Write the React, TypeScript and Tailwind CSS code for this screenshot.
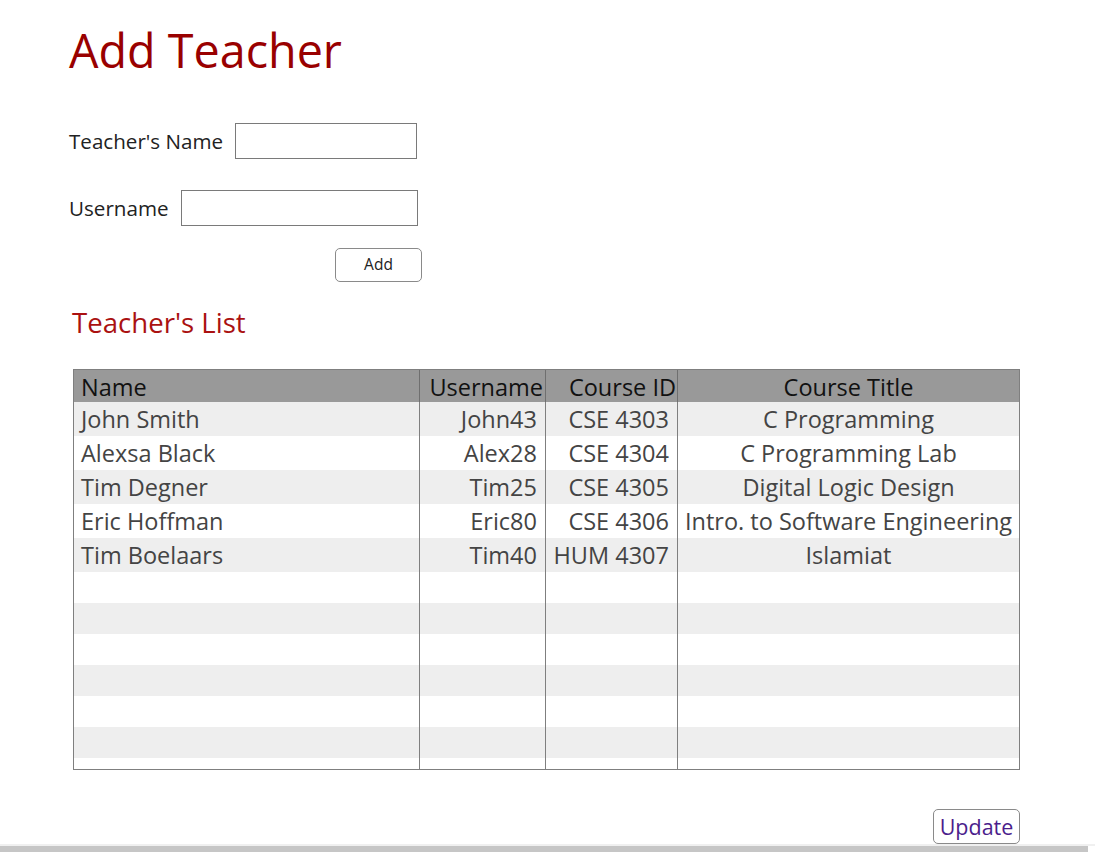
import React from "react";

const teachers = [
  { name: "John Smith", username: "John43", courseId: "CSE 4303", title: "C Programming" },
  { name: "Alexsa Black", username: "Alex28", courseId: "CSE 4304", title: "C Programming Lab" },
  { name: "Tim Degner", username: "Tim25", courseId: "CSE 4305", title: "Digital Logic Design" },
  { name: "Eric Hoffman", username: "Eric80", courseId: "CSE 4306", title: "Intro. to Software Engineering" },
  { name: "Tim Boelaars", username: "Tim40", courseId: "HUM 4307", title: "Islamiat" },
];

const cols = "grid grid-cols-[345px_126px_132px_342px]";

const App = () => {
  return (
    <div
      className="relative w-[1095px] h-[852px] bg-white overflow-hidden"
      style={{ fontFamily: '"Open Sans", "Noto Sans", sans-serif' }}
    >
      <div className="pl-[69px] pt-[20px]">
        <h1 className="text-[46.7px] leading-[60px] text-[#990000]">Add Teacher</h1>

        <div className="mt-[43px] flex items-center h-[36px]">
          <label className="text-[20.6px] text-[#222] mr-[12px]">Teacher's Name</label>
          <input
            type="text"
            className="w-[182px] h-[36px] border border-[#7a7a7a] outline-none px-2"
          />
        </div>

        <div className="mt-[31px] flex items-center h-[36px]">
          <label className="text-[20.6px] text-[#222] mr-[12px]">Username</label>
          <input
            type="text"
            className="w-[237px] h-[36px] border border-[#7a7a7a] outline-none px-2"
          />
        </div>

        <div className="mt-[22px] w-[353px] flex justify-end">
          <button className="w-[87px] h-[34px] border border-[#8a8a8a] rounded-[5px] text-[15.5px] text-[#222] bg-white">
            Add
          </button>
        </div>

        <h2 className="mt-[22px] ml-[3px] text-[27.6px] leading-[36px] text-[#aa1111]">
          Teacher's List
        </h2>
      </div>

      <div className="ml-[73px] mt-[29px] w-[947px] h-[401px] border border-[#7f7f7f] flex flex-col text-[23.5px]">
        <div className={`${cols} h-[32px] bg-[#999999] text-[#111] leading-[35px]`}>
          <div className="pl-[7px]">Name</div>
          <div className="border-l border-[#6f6f6f] text-right pr-[2px] whitespace-nowrap">Username</div>
          <div className="border-l border-[#6f6f6f] text-right pr-[1px] whitespace-nowrap">Course ID</div>
          <div className="border-l border-[#6f6f6f] text-center">Course Title</div>
        </div>
        {teachers.map((t, i) => (
          <div
            key={t.username}
            className={`${cols} h-[34px] leading-[35px] text-[#444] ${i % 2 === 0 ? "bg-[#eeeeee]" : "bg-white"}`}
          >
            <div className="pl-[7px]">{t.name}</div>
            <div className="border-l border-[#7f7f7f] text-right pr-[8px]">{t.username}</div>
            <div className="border-l border-[#7f7f7f] text-right pr-[8px] whitespace-nowrap">{t.courseId}</div>
            <div className="border-l border-[#7f7f7f] text-center whitespace-nowrap">{t.title}</div>
          </div>
        ))}
        {[0, 1, 2, 3, 4, 5, 6].map((i) => (
          <div
            key={i}
            className={`${cols} ${i === 6 ? "flex-1" : "h-[31px]"} ${i % 2 === 1 ? "bg-[#eeeeee]" : "bg-white"}`}
          >
            <div />
            <div className="border-l border-[#7f7f7f]" />
            <div className="border-l border-[#7f7f7f]" />
            <div className="border-l border-[#7f7f7f]" />
          </div>
        ))}
      </div>

      <div className="relative z-10 mt-[39px] w-[1020px] flex justify-end">
        <button className="w-[87px] h-[35px] border border-[#8a8a8a] rounded-[5px] text-[21.5px] text-[#4b1d8c] bg-white leading-none">
          Update
        </button>
      </div>

      <div className="absolute left-0 bottom-0 w-[1095px] h-[8px] flex flex-col">
        <div className="h-[2px] bg-[#f0f0f0]" />
        <div className="h-[6px] w-[1088px] bg-[#c6c6c6]" />
      </div>
    </div>
  );
};

export default App;
